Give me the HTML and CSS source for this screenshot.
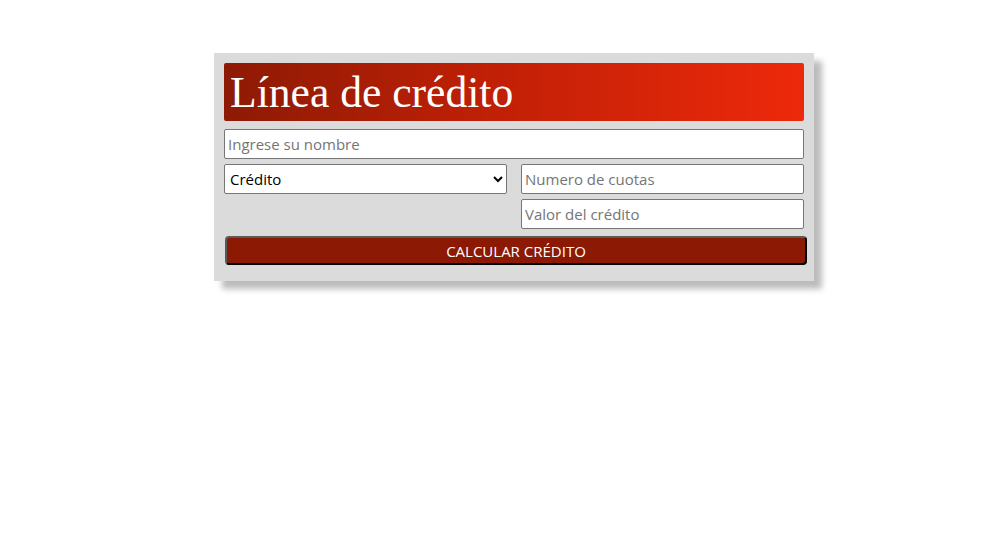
FILE: index.html
```html
<!DOCTYPE html>
<html lang="es">
<head>
<meta charset="utf-8">
<title>Línea de crédito</title>
<link rel="stylesheet" href="styles.css">
</head>
<body>
<main class="page">
  <div class="card">
    <h1 class="title">Línea de crédito</h1>
    <input class="field" type="text" placeholder="Ingrese su nombre">
    <div class="grid">
      <select class="field select">
        <option>Crédito</option>
      </select>
      <input class="field" type="text" placeholder="Numero de cuotas">
      <div class="spacer"></div>
      <input class="field" type="text" placeholder="Valor del crédito">
    </div>
    <button class="btn" type="button">CALCULAR CRÉDITO</button>
  </div>
</main>
</body>
</html>
```
FILE: styles.css
```css
html, body {
  margin: 0;
  padding: 0;
  background: #ffffff;
}

.page {
  min-height: 535px;
  padding: 53px 0 0 214px;
  box-sizing: border-box;
}

.card {
  width: 580px;
  padding: 10px 10px 16px;
  background: #dcdbdc;
  box-shadow: 8px 8px 6px #bcbcbc;
  display: flex;
  flex-direction: column;
}

.title {
  margin: 0 0 8px;
  height: 58px;
  box-sizing: border-box;
  padding: 1px 6px 0;
  display: flex;
  align-items: center;
  border-radius: 2px;
  background: linear-gradient(to right, #8d1a04, #bf2006 45%, #ed290b);
  color: #ffffff;
  font-family: "Liberation Serif", "Times New Roman", serif;
  font-weight: normal;
  font-size: 43.6px;
  line-height: 1;
}

.field {
  box-sizing: border-box;
  height: 30px;
  width: 100%;
  margin: 0;
  padding: 0 3px;
  border: 1px solid #767676;
  border-radius: 2px;
  background: #ffffff;
  font-family: "Open Sans", "Noto Sans", sans-serif;
  font-size: 15px;
  color: #000000;
}

.field::placeholder {
  color: #757575;
}

.select {
  padding: 0 1px;
}

.grid {
  margin-top: 5px;
  display: grid;
  grid-template-columns: 1fr 1fr;
  column-gap: 14px;
  row-gap: 5px;
}

.btn {
  box-sizing: border-box;
  margin: 7px 0 0 1px;
  width: calc(100% + 2px);
  height: 29px;
  border: 2px solid;
  border-color: #5a5a5a #000000 #000000 #5a5a5a;
  border-radius: 4px;
  background: #8b1904;
  color: #ffffff;
  font-family: "Open Sans", "Noto Sans", sans-serif;
  font-size: 15px;
  padding: 0;
}
```
